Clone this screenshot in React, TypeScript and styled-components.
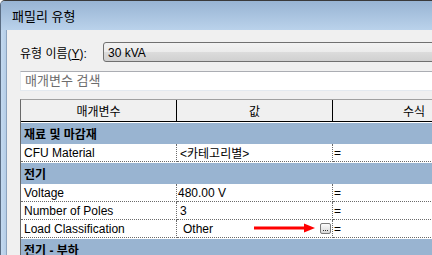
import { Fragment } from "react";
import styled, { createGlobalStyle } from "styled-components";

const GlobalStyle = createGlobalStyle`
  html, body {
    margin: 0;
    padding: 0;
    background: #ffffff;
    overflow: hidden;
  }
  body {
    font-family: "Liberation Sans", "Noto Sans CJK KR", sans-serif;
    font-size: 12px;
    color: #000000;
  }
`;

const Window = styled.div`
  width: 432px;
  height: 255px;
  box-sizing: border-box;
  overflow: hidden;
  display: flex;
  flex-direction: column;
  border-top: 1px solid #3a3a3a;
  border-left: 1px solid #5a6c82;
  border-top-left-radius: 5px;
  background: #b9d1ea;
`;

const TitleBar = styled.div`
  flex: none;
  height: 29px;
  display: flex;
  align-items: center;
  padding-left: 11px;
  background: linear-gradient(#98b4d3, #bad2eb);
  font-size: 13px;
`;

const Body = styled.div`
  flex: 1;
  display: flex;
  min-height: 0;
`;

const Frame = styled.div`
  flex: none;
  width: 5px;
  background: linear-gradient(90deg, #c4daf0, #b5cde6);
`;

const Client = styled.div`
  flex: 1;
  min-width: 0;
  background: #f0f0f0;
  border-left: 1px solid #8da4bf;
  padding: 12px 0 0 13px;
  overflow: hidden;
`;

const TypeRow = styled.div`
  display: flex;
  align-items: center;
  height: 20px;
`;

const Label = styled.div`
  flex: none;
  width: 83px;
  padding-top: 1px;
`;

const Combo = styled.div`
  flex: 1;
  height: 20px;
  box-sizing: border-box;
  margin-right: -20px;
  display: flex;
  align-items: center;
  padding: 1px 0 0 4px;
  border: 1px solid #707070;
  border-radius: 3px;
  background: linear-gradient(#f2f2f2 0%, #ebebeb 50%, #dcdcdc 50%, #d0d0d0 100%);
`;

const Search = styled.div`
  margin-top: 9px;
  margin-right: -20px;
  height: 20px;
  box-sizing: border-box;
  display: flex;
  align-items: center;
  padding: 0 0 3px 4px;
  background: #ffffff;
  border: 1px solid #e3e9ef;
  border-top-color: #abadb3;
  color: #6d6d6d;
  font-size: 13px;
`;

const Table = styled.div`
  margin-top: 8px;
  margin-right: -80px;
  display: grid;
  grid-template-columns: 156px 156px 162px;
  border-top: 1px solid #a0a0a0;
  border-left: 1px solid #696969;
  background: #ffffff;
`;

const HeadCell = styled.div<{ $last?: boolean }>`
  height: 22px;
  box-sizing: border-box;
  display: flex;
  align-items: center;
  justify-content: center;
  background: #f0f0f0;
  border-bottom: 1px solid #000000;
  border-right: ${(p) => (p.$last ? "none" : "1px solid #000000")};
`;

const GroupRow = styled.div`
  grid-column: 1 / -1;
  height: 22px;
  box-sizing: border-box;
  display: flex;
  align-items: center;
  padding-left: 3px;
  border-top: 1px solid #ffffff;
  background: #99b4d1;
  font-weight: bold;
`;

const Cell = styled.div<{ $pad?: number; $last?: boolean }>`
  position: relative;
  height: 18px;
  box-sizing: border-box;
  display: flex;
  align-items: center;
  padding-left: ${(p) => p.$pad ?? 3}px;
  border-bottom: 1px dotted #6a6a6a;
  border-right: ${(p) => (p.$last ? "none" : "1px dotted #6a6a6a")};
  white-space: nowrap;
`;

const DotsButton = styled.div`
  margin-left: auto;
  margin-right: 1px;
  width: 11px;
  height: 11px;
  box-sizing: border-box;
  display: flex;
  align-items: flex-end;
  justify-content: center;
  gap: 1px;
  padding-bottom: 2px;
  border: 1px solid #7a7a7a;
  border-radius: 2px;
  background: linear-gradient(#fbfbfb, #d8d8d8);
`;

const Dot = styled.span`
  width: 1px;
  height: 1px;
  background: #303030;
`;

const Arrow = styled.svg`
  position: absolute;
  left: 77px;
  top: 3px;
`;

type Row = { name: string; value: string; pad?: number; pick?: boolean };

const groups: { title: string; rows: Row[] }[] = [
  { title: "재료 및 마감재", rows: [{ name: "CFU Material", value: "<카테고리별>", pad: 3 }] },
  {
    title: "전기",
    rows: [
      { name: "Voltage", value: "480.00 V", pad: 1 },
      { name: "Number of Poles", value: "3", pad: 3 },
      { name: "Load Classification", value: "Other", pad: 6, pick: true },
    ],
  },
  { title: "전기 - 부하", rows: [] },
];

export default function App() {
  return (
    <>
      <GlobalStyle />
      <Window>
        <TitleBar>패밀리 유형</TitleBar>
        <Body>
          <Frame />
          <Client>
            <TypeRow>
              <Label>
                유형 이름(<u>Y</u>):
              </Label>
              <Combo>30 kVA</Combo>
            </TypeRow>
            <Search>매개변수 검색</Search>
            <Table>
              <HeadCell>매개변수</HeadCell>
              <HeadCell>값</HeadCell>
              <HeadCell $last>수식</HeadCell>
              {groups.map((g) => (
                <Fragment key={g.title}>
                  <GroupRow>{g.title}</GroupRow>
                  {g.rows.map((r) => (
                    <Fragment key={r.name}>
                      <Cell>{r.name}</Cell>
                      <Cell $pad={r.pad}>
                        {r.value}
                        {r.pick && (
                          <>
                            <Arrow width="62" height="10" viewBox="0 0 62 10">
                              <rect x="0" y="3.5" width="53" height="3" fill="#ff0000" />
                              <polygon points="50,0.5 61,5 50,9.5" fill="#ff0000" />
                            </Arrow>
                            <DotsButton>
                              <Dot />
                              <Dot />
                              <Dot />
                            </DotsButton>
                          </>
                        )}
                      </Cell>
                      <Cell $pad={1} $last>
                        =
                      </Cell>
                    </Fragment>
                  ))}
                </Fragment>
              ))}
            </Table>
          </Client>
        </Body>
      </Window>
    </>
  );
}
